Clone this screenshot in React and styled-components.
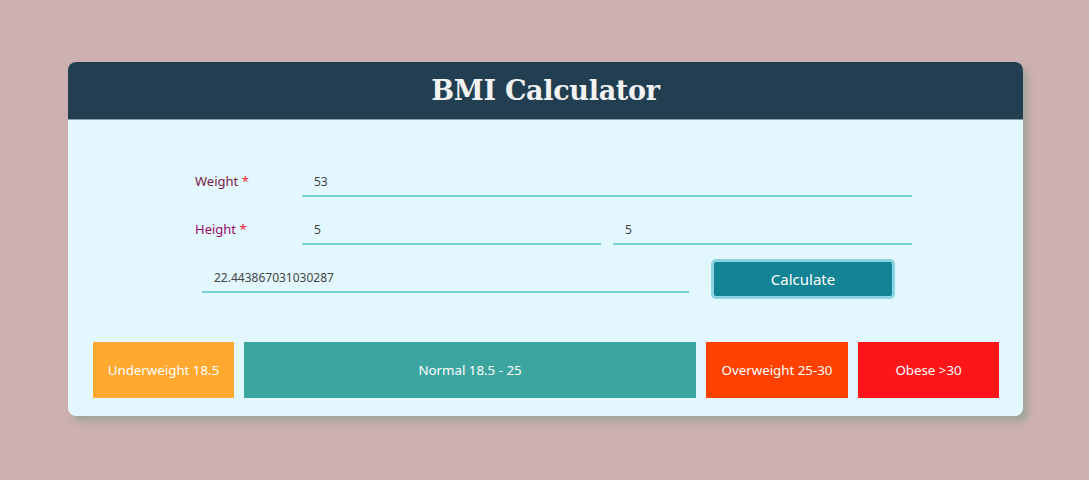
import React, { useState } from 'react';
import styled, { createGlobalStyle } from 'styled-components';

const GlobalStyle = createGlobalStyle`
  html, body {
    margin: 0;
    padding: 0;
    background: #cdb0b0;
    font-family: "Noto Sans", "Open Sans", sans-serif;
  }
`;

const Page = styled.div`
  width: 1089px;
  height: 480px;
  padding: 62px 0 0 68px;
  box-sizing: border-box;
`;

const Card = styled.div`
  width: 955px;
  border-radius: 8px;
  overflow: hidden;
  background: #e2f7fe;
  box-shadow: 5px 6px 6px rgba(150, 160, 150, 0.75);
`;

const Header = styled.div`
  height: 57px;
  background: #213f51;
  border-bottom: 1px solid #8a9ca6;
  display: flex;
  align-items: center;
  justify-content: center;
  h1 {
    margin: 0;
    color: #f2f2f2;
    font-family: "DejaVu Serif", "Liberation Serif", serif;
    font-size: 27px;
    font-weight: bold;
    letter-spacing: -0.3px;
  }
`;

const Body = styled.div`
  padding: 49px 24px 18px 25px;
`;

const Form = styled.div`
  margin-left: 102px;
  width: 717px;
  display: flex;
  flex-direction: column;
`;

const Row = styled.div`
  display: flex;
  align-items: ${p => (p.$end ? 'flex-end' : 'center')};
  margin-top: ${p => p.$top || 0}px;
  padding-left: ${p => p.$indent || 0}px;
`;

const Label = styled.label`
  width: 107px;
  flex-shrink: 0;
  padding-bottom: 4px;
  font-size: 13px;
  color: ${p => p.$color};
  span {
    color: #f0202a;
  }
`;

const Inputs = styled.div`
  flex: 1;
  display: flex;
  gap: 12px;
`;

const Field = styled.input`
  flex: 1;
  min-width: 0;
  height: 28px;
  box-sizing: border-box;
  border: none;
  border-bottom: 2px solid #79d1db;
  background: transparent;
  padding: 0 12px 2px;
  font-family: inherit;
  font-size: 12px;
  color: #444;
  outline: none;
`;

const Result = styled(Field)`
  flex: none;
  width: 487px;
  margin-bottom: 6px;
`;

const Button = styled.button`
  margin-left: 22px;
  width: 184px;
  height: 40px;
  box-sizing: border-box;
  background: #138496;
  border: 3px solid #8dd4e2;
  border-radius: 5px;
  color: #fff;
  font-family: inherit;
  font-size: 15px;
  cursor: pointer;
`;

const Categories = styled.div`
  margin-top: 43px;
  display: grid;
  grid-template-columns: 141px 1fr 142px 141px;
  column-gap: 10px;
  height: 56px;
`;

const Category = styled.div`
  background: ${p => p.$bg};
  color: #fff;
  font-size: 13.3px;
  display: flex;
  align-items: center;
  justify-content: center;
`;

export default function App() {
  const [weight, setWeight] = useState('53');
  const [feet, setFeet] = useState('5');
  const [inches, setInches] = useState('5');
  const [bmi, setBmi] = useState('22.443867031030287');

  const calculate = () => {
    const m = (Number(feet) * 12 + Number(inches)) * 0.0254;
    setBmi(String(Number(weight) / (m * m)));
  };

  return (
    <>
      <GlobalStyle />
      <Page>
        <Card>
          <Header>
            <h1>BMI Calculator</h1>
          </Header>
          <Body>
            <Form>
              <Row>
                <Label $color="#7c1a45">Weight <span>*</span></Label>
                <Inputs>
                  <Field value={weight} onChange={e => setWeight(e.target.value)} />
                </Inputs>
              </Row>
              <Row $top={20}>
                <Label $color="#9a0a6a">Height <span>*</span></Label>
                <Inputs>
                  <Field value={feet} onChange={e => setFeet(e.target.value)} />
                  <Field value={inches} onChange={e => setInches(e.target.value)} />
                </Inputs>
              </Row>
              <Row $top={14} $end $indent={7}>
                <Result value={bmi} readOnly />
                <Button onClick={calculate}>Calculate</Button>
              </Row>
            </Form>
            <Categories>
              <Category $bg="#ffa931">Underweight 18.5</Category>
              <Category $bg="#3ca59f">Normal 18.5 - 25</Category>
              <Category $bg="#ff4100">Overweight 25-30</Category>
              <Category $bg="#fd1519">Obese &gt;30</Category>
            </Categories>
          </Body>
        </Card>
      </Page>
    </>
  );
}
